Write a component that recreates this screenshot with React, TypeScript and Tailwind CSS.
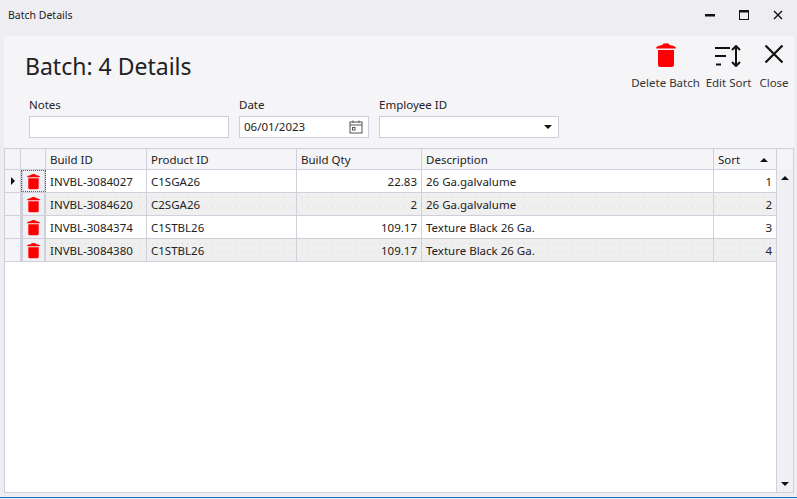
const FONT = "font-['Noto_Sans',sans-serif]";

const rows = [
  { build: "INVBL-3084027", product: "C1SGA26", qty: "22.83", desc: "26 Ga.galvalume", sort: "1" },
  { build: "INVBL-3084620", product: "C2SGA26", qty: "2", desc: "26 Ga.galvalume", sort: "2" },
  { build: "INVBL-3084374", product: "C1STBL26", qty: "109.17", desc: "Texture Black 26 Ga.", sort: "3" },
  { build: "INVBL-3084380", product: "C1STBL26", qty: "109.17", desc: "Texture Black 26 Ga.", sort: "4" },
];

function TrashIcon({ w, h }: { w: number; h: number }) {
  return (
    <svg width={w} height={h} viewBox="0 0 20 24" fill="#ff0000">
      <path d="M7 .8 Q10 -.2 13 .8 L13.5 2 Q17.5 2.5 19.7 4 L19.7 5.5 L.3 5.5 L.3 4 Q2.5 2.5 6.5 2 Z" />
      <path d="M2 7 H18 V21.5 Q18 24 15.5 24 H4.5 Q2 24 2 21.5 Z" />
    </svg>
  );
}

function SortIcon() {
  return (
    <svg width="28" height="22" viewBox="0 0 28 22" fill="none" stroke="#111" strokeWidth="2" className="mt-[2px]">
      <path d="M0 3 H15" />
      <path d="M0 11 H11" />
      <path d="M1 19.5 H6" />
      <path d="M21 1 V21" />
      <path d="M17 5 L21 1 L25 5" />
      <path d="M17 17 L21 21 L25 17" />
    </svg>
  );
}

function Field({ label, width, children }: { label: string; width: string; children?: React.ReactNode }) {
  return (
    <div className={`flex flex-col ${width}`}>
      <span className="text-[11.5px] leading-[16px] text-[#222] h-[19px]">{label}</span>
      <div className="h-[22px] bg-white border border-[#ccced9] flex items-center justify-between pl-[4px] pr-[5px] text-[11.5px] text-[#222]">
        {children}
      </div>
    </div>
  );
}

function ToolButton({ label, className, children }: { label: string; className: string; children: React.ReactNode }) {
  return (
    <div className={`flex flex-col items-center ${className}`}>
      <div className="h-[26px] flex items-center justify-center">{children}</div>
      <span className="mt-[7px] text-[11.5px] leading-[16px] text-[#333] whitespace-nowrap">{label}</span>
    </div>
  );
}

function Cell({ className, children }: { className: string; children?: React.ReactNode }) {
  return (
    <div className={`h-full shrink-0 border-r border-[#d0d0dc] flex items-center px-[4px] pt-[1px] whitespace-nowrap ${className}`}>
      {children}
    </div>
  );
}

export default function App() {
  return (
    <div className={`${FONT} w-[797px] h-[499px] overflow-hidden bg-[#eeeef2] flex flex-col text-[#222]`}>
      {/* title bar */}
      <div className="h-[36px] shrink-0 flex items-center justify-between pl-[8px] pr-[14px]">
        <span className="text-[10.5px] -mt-[4px]">Batch Details</span>
        <div className="flex items-center gap-[24px] -mt-[6px]">
          <svg width="10" height="10" viewBox="0 0 10 10"><path d="M0 4 H10 V6.5 H0 Z" fill="#111" /></svg>
          <svg width="10" height="10" viewBox="0 0 10 10" fill="none" stroke="#111"><rect x=".5" y=".5" width="9" height="9" /><path d="M0 1.5 H10" strokeWidth="2" /></svg>
          <svg width="10" height="10" viewBox="0 0 10 10" fill="none" stroke="#111" strokeWidth="1.4"><path d="M1 1 L9 9 M9 1 L1 9" /></svg>
        </div>
      </div>

      {/* form header */}
      <div className="ml-[4px] mr-[3px] h-[112px] shrink-0 bg-[#f5f5f8] flex justify-between">
        <div className="flex flex-col pl-[21px]">
          <h1 className="text-[23px] leading-[32px] mt-[14px] text-[#222]">Batch: 4 Details</h1>
          <div className="flex gap-[10px] ml-[4px] mt-[15px]">
            <Field label="Notes" width="w-[200px]" />
            <Field label="Date" width="w-[130px]">
              <span>06/01/2023</span>
              <svg width="14" height="14" viewBox="0 0 14 14" fill="none" stroke="#555" strokeWidth="1">
                <rect x="1" y="2" width="12" height="11" />
                <path d="M1 5 H13 M4 .5 V3 M10 .5 V3" />
                <rect x="3.5" y="7.5" width="2.5" height="2.5" />
              </svg>
            </Field>
            <Field label="Employee ID" width="w-[180px]">
              <span />
              <span className="w-0 h-0 mr-[1px] border-x-[4px] border-x-transparent border-t-[4px] border-t-[#111]" />
            </Field>
          </div>
        </div>
        <div className="flex items-start pt-[6px] pr-[5px]">
          <ToolButton label="Delete Batch" className="w-[67px]"><TrashIcon w={20} h={24} /></ToolButton>
          <ToolButton label="Edit Sort" className="w-[45px] ml-[7px]"><SortIcon /></ToolButton>
          <ToolButton label="Close" className="w-[30px] ml-[8px]">
            <svg width="20" height="20" viewBox="0 0 20 20" fill="none" stroke="#111" strokeWidth="2.2" className="-mt-[2px]"><path d="M1.5 1.5 L18.5 18.5 M18.5 1.5 L1.5 18.5" /></svg>
          </ToolButton>
        </div>
      </div>

      {/* data grid */}
      <div className="ml-[4px] mr-[3px] h-[345px] shrink-0 bg-white border border-[#d0d0dc] flex text-[11.5px]">
        <div className="flex-1 min-w-0 flex flex-col border-r border-[#d0d0dc]">
          <div className="h-[21px] shrink-0 flex bg-[#f5f5f8] border-b border-[#d0d0dc]">
            <Cell className="w-[16px]" />
            <Cell className="w-[25px]" />
            <Cell className="w-[101px]">Build ID</Cell>
            <Cell className="w-[150px]">Product ID</Cell>
            <Cell className="w-[125px]">Build Qty</Cell>
            <Cell className="w-[292px]">Description</Cell>
            <Cell className="w-[62px] justify-between pr-[8px] !border-r-0">
              <span>Sort</span>
              <span className="w-0 h-0 border-x-[4px] border-x-transparent border-b-[4px] border-b-[#111]" />
            </Cell>
          </div>
          {rows.map((r, i) => {
            const alt = i % 2 === 1;
            const bg = alt
              ? "bg-[#efefef] bg-[radial-gradient(#e0e0e0_0.6px,transparent_0.6px)] bg-[length:6px_9px]"
              : "bg-white";
            return (
              <div key={r.build} className={`h-[23px] shrink-0 flex border-b border-[#d0d0dc] ${bg}`}>
                <Cell className="w-[16px] bg-[#f5f5f8] justify-center !px-0 !pt-0">
                  {i === 0 && <span className="w-0 h-0 border-y-[4px] border-y-transparent border-l-[4px] border-l-[#111]" />}
                </Cell>
                <Cell className={`w-[25px] justify-center !px-0 !pt-0 bg-[#f0f0f4] border-l-2 border-r-2 border-[#d0d0dc] ${i === 0 ? "outline-1 outline-dotted -outline-offset-1 outline-[#1a6fb5]" : ""}`}>
                  <TrashIcon w={13} h={17} />
                </Cell>
                <Cell className="w-[101px]">{r.build}</Cell>
                <Cell className="w-[150px]">{r.product}</Cell>
                <Cell className="w-[125px] justify-end">{r.qty}</Cell>
                <Cell className="w-[292px]">{r.desc}</Cell>
                <Cell className="w-[62px] justify-end !border-r-0">{r.sort}</Cell>
              </div>
            );
          })}
        </div>
        {/* scrollbar */}
        <div className="w-[16px] shrink-0 bg-[#f0f0f4] flex flex-col">
          <div className="h-[21px] bg-[#f5f5f8] border-b border-[#f0f0f4]" />
          <div className="flex-1 flex flex-col items-center justify-between py-[6px]">
            <span className="w-0 h-0 border-x-[4px] border-x-transparent border-b-[4px] border-b-[#111]" />
            <span className="w-0 h-0 border-x-[4px] border-x-transparent border-t-[4px] border-t-[#111]" />
          </div>
        </div>
      </div>

      <div className="flex-1" />
      <div className="h-[1px] shrink-0 bg-[#1a6fb5]" />
      <div className="h-[1px] shrink-0 bg-[#eeeef2]" />
    </div>
  );
}
